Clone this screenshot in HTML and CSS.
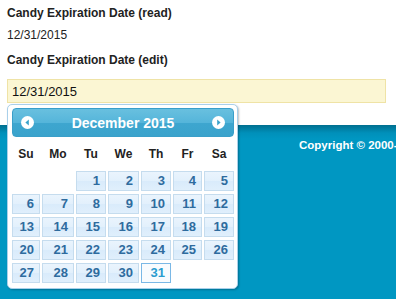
FILE: index.html
```html
<!DOCTYPE html>
<html lang="en">
<head>
    <meta charset="UTF-8">
    <meta name="viewport" content="width=device-width, initial-scale=1.0">
    <title>Candy Expiration Date</title>
    <link rel="stylesheet" href="styles.css">
</head>
<body>
    <div class="content">
        <label class="field-label">Candy Expiration Date (read)</label>
        <div class="field-value">12/31/2015</div>

        <label class="field-label label-edit" for="expDate">Candy Expiration Date (edit)</label>
        <div class="date-field">
            <input type="text" id="expDate" class="date-input" value="12/31/2015">

            <div class="datepicker">
                <div class="dp-header">
                    <a class="dp-nav" href="#" title="Prev">
                        <svg width="13" height="13" viewBox="0 0 13 13"><circle cx="6.5" cy="6.5" r="6.5" fill="#fff"/><path d="M7.8 3.6 L4.4 6.5 L7.8 9.4 Z" fill="#3aa3cc"/></svg>
                    </a>
                    <span class="dp-title">December 2015</span>
                    <a class="dp-nav" href="#" title="Next">
                        <svg width="13" height="13" viewBox="0 0 13 13"><circle cx="6.5" cy="6.5" r="6.5" fill="#fff"/><path d="M5.2 3.6 L8.6 6.5 L5.2 9.4 Z" fill="#3aa3cc"/></svg>
                    </a>
                </div>
                <div class="dp-grid">
                    <span class="dp-dow">Su</span>
                    <span class="dp-dow">Mo</span>
                    <span class="dp-dow">Tu</span>
                    <span class="dp-dow">We</span>
                    <span class="dp-dow">Th</span>
                    <span class="dp-dow">Fr</span>
                    <span class="dp-dow">Sa</span>

                    <span class="dp-empty"></span>
                    <span class="dp-empty"></span>
                    <a class="dp-day" href="#">1</a>
                    <a class="dp-day" href="#">2</a>
                    <a class="dp-day" href="#">3</a>
                    <a class="dp-day" href="#">4</a>
                    <a class="dp-day" href="#">5</a>

                    <a class="dp-day" href="#">6</a>
                    <a class="dp-day" href="#">7</a>
                    <a class="dp-day" href="#">8</a>
                    <a class="dp-day" href="#">9</a>
                    <a class="dp-day" href="#">10</a>
                    <a class="dp-day" href="#">11</a>
                    <a class="dp-day" href="#">12</a>

                    <a class="dp-day" href="#">13</a>
                    <a class="dp-day" href="#">14</a>
                    <a class="dp-day" href="#">15</a>
                    <a class="dp-day" href="#">16</a>
                    <a class="dp-day" href="#">17</a>
                    <a class="dp-day" href="#">18</a>
                    <a class="dp-day" href="#">19</a>

                    <a class="dp-day" href="#">20</a>
                    <a class="dp-day" href="#">21</a>
                    <a class="dp-day" href="#">22</a>
                    <a class="dp-day" href="#">23</a>
                    <a class="dp-day" href="#">24</a>
                    <a class="dp-day" href="#">25</a>
                    <a class="dp-day" href="#">26</a>

                    <a class="dp-day" href="#">27</a>
                    <a class="dp-day" href="#">28</a>
                    <a class="dp-day" href="#">29</a>
                    <a class="dp-day" href="#">30</a>
                    <a class="dp-day dp-active" href="#">31</a>
                </div>
            </div>
        </div>
    </div>

    <div class="footer">
        <p class="copyright">Copyright &copy; 2000-2015 Candy Co.</p>
    </div>
</body>
</html>
```

FILE: styles.css
```css
html, body {
    height: 100%;
}
body {
    font-family: 'Liberation Sans', Arial, Helvetica, sans-serif;
    margin: 0;
    padding: 0;
    background-color: #fff;
    color: #222;
    overflow: hidden;
    display: flex;
    flex-direction: column;
}
.content {
    padding: 6px 7px 0 7px;
}
.field-label {
    display: block;
    font-size: 12px;
    font-weight: bold;
    line-height: 14px;
    color: #222;
}
.field-value {
    font-size: 12px;
    line-height: 14px;
    margin-top: 8px;
}
.label-edit {
    margin-top: 11px;
}
.date-field {
    position: relative;
    margin-top: 12px;
}
.date-input {
    display: block;
    width: 379px;
    height: 24px;
    box-sizing: border-box;
    border: 1px solid #efe3a6;
    background-color: #fbf6d3;
    font-family: 'Liberation Sans', Arial, sans-serif;
    font-size: 13px;
    color: #111;
    padding: 0 4px;
    margin: 0;
    outline: none;
}
.datepicker {
    position: absolute;
    left: 0;
    top: 25px;
    z-index: 10;
    width: 231px;
    box-sizing: border-box;
    padding: 3px 3px 5px 4px;
    background-color: #fff;
    border: 1px solid #a9d0ea;
    border-radius: 5px;
    box-shadow: 1px 1px 2px rgba(0,0,0,0.25);
}
.dp-header {
    display: flex;
    align-items: center;
    justify-content: space-between;
    height: 29px;
    box-sizing: border-box;
    padding: 0 8px;
    border: 1px solid #3a9fc9;
    border-radius: 4px;
    background: linear-gradient(to bottom, #69c0df 0%, #55b5da 50%, #3ea6cf 51%, #3aa3cc 100%);
}
.dp-nav {
    display: flex;
    width: 13px;
    height: 13px;
}
.dp-title {
    color: #fff;
    font-size: 14px;
    font-weight: bold;
}
.dp-grid {
    display: grid;
    grid-template-columns: 28px 32px 30px 31px 30px 29px 30px;
    grid-template-rows: 30px;
    grid-auto-rows: 20px;
    column-gap: 2px;
    row-gap: 3px;
    margin-top: 1px;
}
.dp-dow {
    display: flex;
    align-items: center;
    justify-content: center;
    font-size: 12px;
    font-weight: bold;
    color: #222;
    padding-top: 1px;
}
.dp-day {
    display: block;
    box-sizing: border-box;
    border: 1px solid #c5dcee;
    background: linear-gradient(to bottom, #eaf4fd 0%, #e2f0fc 50%, #d9ebfb 51%, #e0effc 100%);
    color: #2e6b9e;
    font-size: 13px;
    font-weight: bold;
    line-height: 18px;
    text-align: right;
    padding-right: 5px;
    text-decoration: none;
}
.dp-active {
    border-color: #7ab8e6;
    background: #f8fbfe;
    color: #2a9ccf;
}
.footer {
    flex: 1;
    margin-top: 22px;
    background: linear-gradient(to bottom, #006f8f 0px, #0090ba 8px, #0097c2 14px, #0097c2 100%);
}
.copyright {
    margin: 13px 0 0 299px;
    color: #fff;
    font-size: 11.5px;
    font-weight: bold;
    line-height: 14px;
    white-space: nowrap;
}
```
